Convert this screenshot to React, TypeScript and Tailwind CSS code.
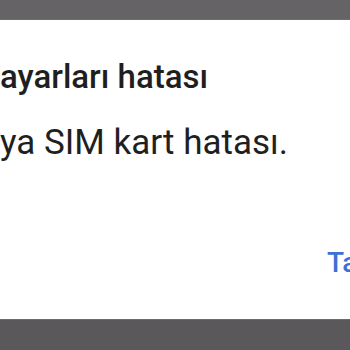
export default function App() {
  return (
    <div className="w-[350px] h-[350px] flex flex-col bg-[#5b595c] overflow-hidden" style={{ fontFamily: "Roboto, 'Noto Sans', sans-serif" }}>
      <div className="h-[20px] bg-[#656366] border-b border-[#6f6d70]" />
      <div className="h-[299px] bg-white flex flex-col">
        <h1 className="mt-[37px] text-[33px] leading-[40px] font-medium text-[#1f1f1f] whitespace-nowrap">
          ayarları hatası
        </h1>
        <p className="mt-[24px] text-[35px] leading-[44px] text-[#1f1f1f] whitespace-nowrap">
          ya SIM kart hatası.
        </p>
        <div className="mt-[80px] flex pl-[327px]">
          <span className="text-[28px] leading-[36px] font-medium text-[#3d6fd8] whitespace-nowrap">Tamam</span>
        </div>
      </div>
      <div className="flex-1 bg-[#5a585b] border-t border-[#6b696c]" />
    </div>
  );
}
